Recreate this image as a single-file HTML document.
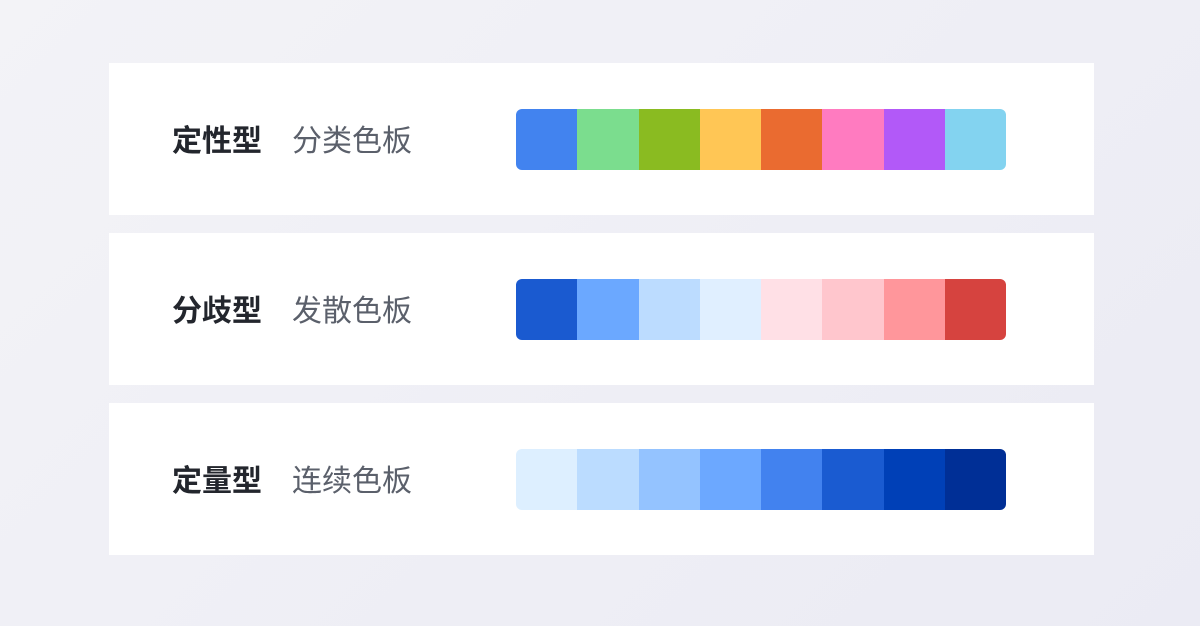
<!DOCTYPE html>
<html><head><meta charset="utf-8"><style>
*{margin:0;padding:0;box-sizing:border-box}
html,body{width:1200px;height:626px;overflow:hidden}
body{background:linear-gradient(135deg,#f3f3f7 0%,#eeeef5 60%,#ebebf4 100%);position:relative;font-family:"Liberation Sans","Noto Sans CJK SC",sans-serif}
.card{position:absolute;left:109px;width:985px;height:152px;background:#fff}
.t1{position:absolute;left:63px;top:59px;font-size:30px;line-height:40px;font-weight:700;color:#23262d}
.t2{position:absolute;left:183px;top:59px;font-size:30px;line-height:40px;color:#5b606b}
.pal{position:absolute;left:407px;top:46px;width:490px;height:61px;border-radius:6px;overflow:hidden;display:flex}
.pal div{flex:1}
</style></head><body>
<div class="card" style="top:63px"><div class="t1">定性型</div><div class="t2">分类色板</div>
<div class="pal"><div style="background:#4283ef"></div><div style="background:#7bdd8e"></div><div style="background:#8abb21"></div><div style="background:#ffc655"></div><div style="background:#ea6b30"></div><div style="background:#ff7bc0"></div><div style="background:#b259f8"></div><div style="background:#83d3f0"></div></div></div>
<div class="card" style="top:233px"><div class="t1">分歧型</div><div class="t2">发散色板</div>
<div class="pal"><div style="background:#1a5ad0"></div><div style="background:#6ba8ff"></div><div style="background:#bcdcff"></div><div style="background:#e0efff"></div><div style="background:#ffe0e6"></div><div style="background:#ffc6cd"></div><div style="background:#ff969b"></div><div style="background:#d6433f"></div></div></div>
<div class="card" style="top:403px"><div class="t1">定量型</div><div class="t2">连续色板</div>
<div class="pal"><div style="background:#ddefff"></div><div style="background:#bbdcff"></div><div style="background:#94c3ff"></div><div style="background:#6ca8ff"></div><div style="background:#4282ef"></div><div style="background:#1a5bd1"></div><div style="background:#0040b7"></div><div style="background:#002f96"></div></div></div>
</body></html>
